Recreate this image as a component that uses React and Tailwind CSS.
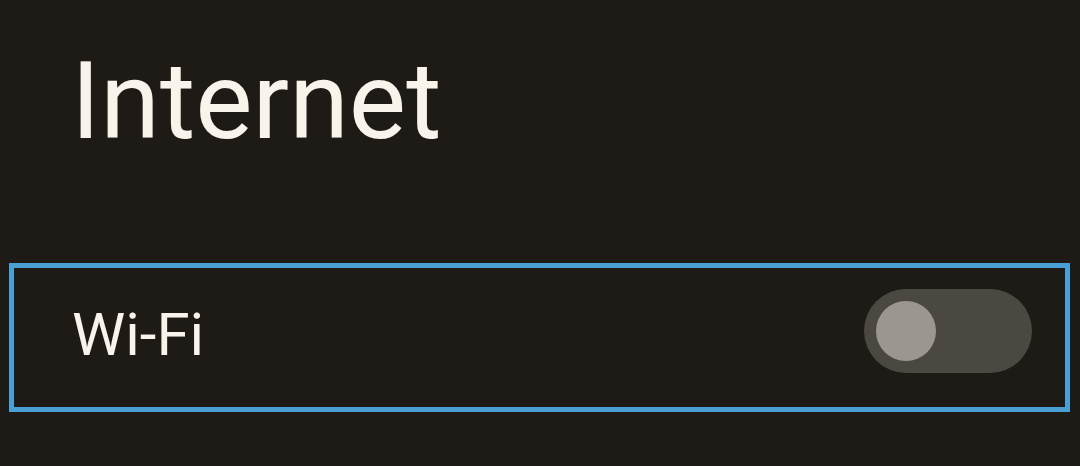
import { useState } from "react";

export default function App() {
  const [wifi, setWifi] = useState(false);

  return (
    <div className="w-[1080px] h-[466px] overflow-hidden bg-[#1e1b17] text-[#f8f3eb] font-['Roboto',sans-serif]">
      {/* Title */}
      <h1 className="pt-[47px] pl-[71px] text-[108px] leading-[108px] font-normal">
        Internet
      </h1>

      {/* Wi-Fi row (focused) */}
      <div className="mt-[108px] ml-[9px] mr-[10px] h-[149px] border-[5px] border-[#4a9fd4] flex items-center justify-between pl-[58px] pr-[33px] pb-[13px]">
        <span className="text-[60px] leading-[60px] mt-[7px]">Wi-Fi</span>
        <button
          onClick={() => setWifi(!wifi)}
          className={`relative w-[168px] h-[84px] rounded-full flex items-center px-[12px] ${
            wifi ? "bg-[#4a9fd4] justify-end" : "bg-[#4b4842] justify-start"
          }`}
        >
          <span className="block w-[60px] h-[60px] rounded-full bg-[#9b9790]" />
        </button>
      </div>
    </div>
  );
}
